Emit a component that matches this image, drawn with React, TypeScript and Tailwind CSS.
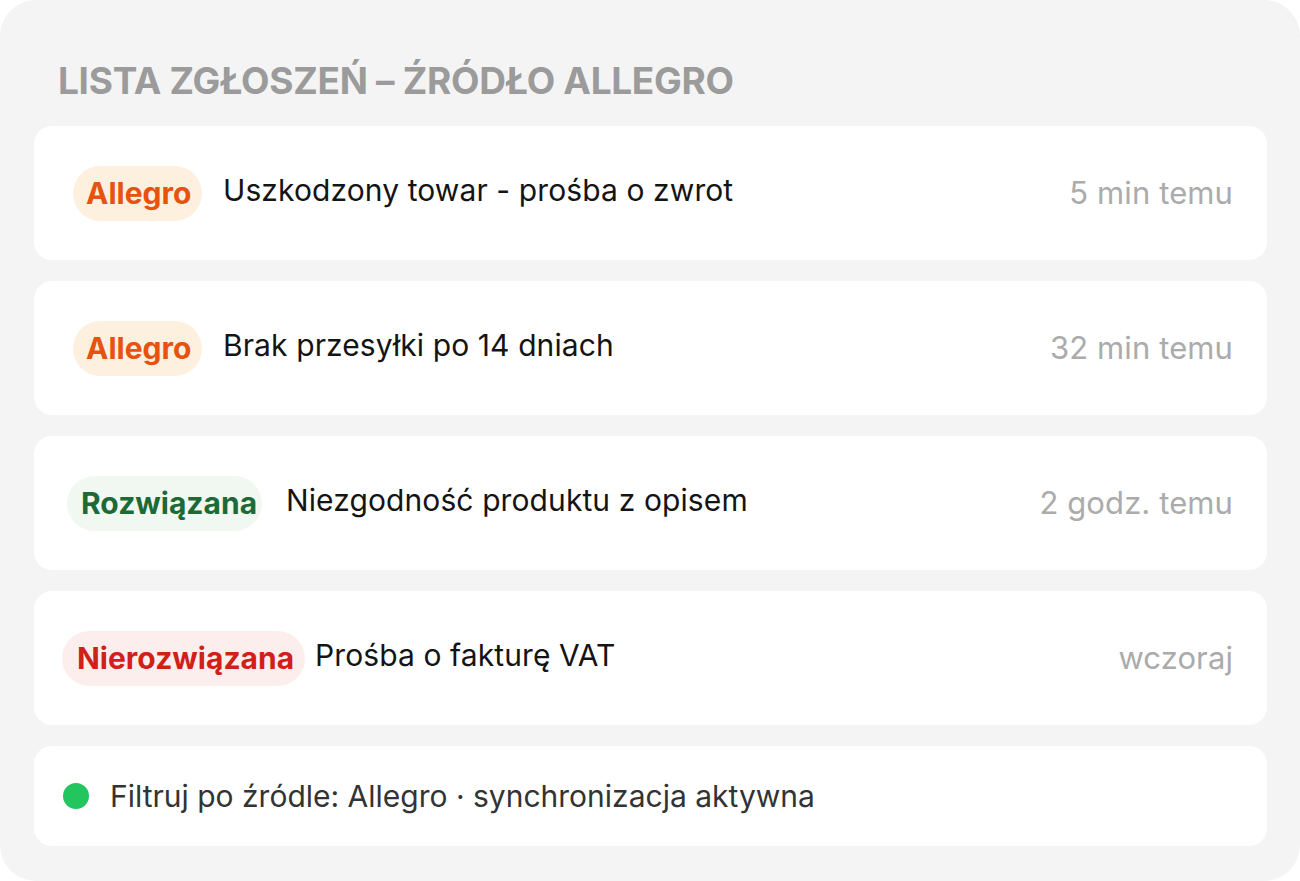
const rows = [
  {
    badge: "Allegro",
    badgeClass: "bg-[#fdf0df] text-[#e5530f] w-[129px] pl-[13px]",
    gap: "ml-[21px]",
    title: "Uszkodzony towar - prośba o zwrot",
    time: "5 min temu",
  },
  {
    badge: "Allegro",
    badgeClass: "bg-[#fdf0df] text-[#e5530f] w-[129px] pl-[13px]",
    gap: "ml-[21px]",
    title: "Brak przesyłki po 14 dniach",
    time: "32 min temu",
  },
  {
    badge: "Rozwiązana",
    badgeClass: "bg-[#f1f8f1] text-[#1d6a36] w-[195px] pl-[14px] -ml-[6px]",
    gap: "ml-[24px]",
    title: "Niezgodność produktu z opisem",
    time: "2 godz. temu",
  },
  {
    badge: "Nierozwiązana",
    badgeClass: "bg-[#fdeeee] text-[#d11f1a] w-[243px] pl-[15px] -ml-[11px]",
    gap: "ml-[10px]",
    title: "Prośba o fakturę VAT",
    time: "wczoraj",
  },
];

export default function App() {
  return (
    <div className="bg-white font-['Inter',sans-serif]">
      <div className="h-[881px] w-[1300px] rounded-[36px] bg-[#f4f4f4] pl-[34px] pr-[33px]">
        <h1 className="pt-[58px] pl-[24px] text-[37px] leading-[46px] font-bold tracking-[-0.3px] text-[#9b9b9b]">
          LISTA ZGŁOSZEŃ – ŹRÓDŁO ALLEGRO
        </h1>

        <div className="mt-[22px] flex flex-col gap-[21px]">
          {rows.map(row => (
            <div
              key={row.title}
              className="flex h-[134px] items-center rounded-[18px] bg-white pl-[39px] pr-[34px]"
            >
              <span
                className={`flex h-[55px] shrink-0 items-center rounded-full text-[30px] font-bold ${row.badgeClass}`}
              >
                {row.badge}
              </span>
              <span className={`-mt-[5px] text-[30px] tracking-[0.1px] text-[#141414] ${row.gap}`}>{row.title}</span>
              <span className="ml-auto text-[31px] tracking-[0.1px] text-[#ababab]">{row.time}</span>
            </div>
          ))}

          <div className="flex h-[100px] items-center rounded-[18px] bg-white pl-[29px]">
            <span className="h-[26px] w-[26px] shrink-0 rounded-full bg-[#22c55e]" />
            <span className="ml-[21px] text-[30px] text-[#333333]">
              Filtruj po źródle: Allegro · synchronizacja aktywna
            </span>
          </div>
        </div>
      </div>
    </div>
  );
}
